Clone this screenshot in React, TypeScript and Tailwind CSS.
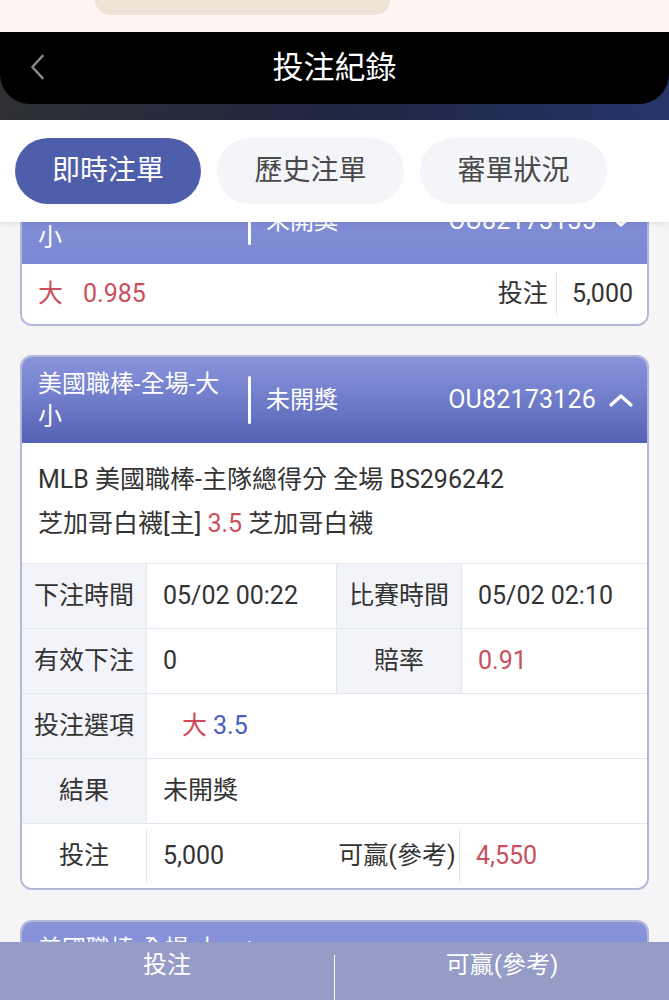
import type { ReactNode } from "react";

const FONT = "font-['Roboto','Noto_Sans_CJK_TC',sans-serif]";

function ChevronUp({ down }: { down?: boolean }) {
  return (
    <svg viewBox="0 0 24 14" className={`h-[14px] w-[24px] ${down ? "rotate-180" : ""}`} aria-hidden="true">
      <polyline points="2,12 12,3 22,12" fill="none" stroke="white" strokeWidth="3.2" strokeLinecap="round" strokeLinejoin="round" />
    </svg>
  );
}

function CardHeader({ id, open }: { id: string; open?: boolean }) {
  return (
    <div
      className={`flex h-[86px] items-center pl-[16px] pr-[14px] text-white ${
        open
          ? "bg-[linear-gradient(180deg,#8994db_0%,#6f7cc9_50%,#5562b4_100%)]"
          : "bg-[linear-gradient(180deg,#8893da,#7a88d3)]"
      }`}
    >
      <div className="w-[196px] text-[24px] leading-[32px]">
        美國職棒-全場-大
        <br />小
      </div>
      <div className="ml-[14px] h-[48px] w-[3px] rounded bg-white" />
      <div className="ml-[15px] text-[24px]">未開獎</div>
      <div className="flex-1 text-right text-[25px] tracking-[0.2px]">{id}</div>
      <div className="ml-[13px] flex items-center">
        <ChevronUp down={!open} />
      </div>
    </div>
  );
}

function Label({ children, white }: { children: ReactNode; white?: boolean }) {
  return (
    <div className={`flex h-[64px] items-center justify-center ${white ? "bg-white" : "bg-[#f3f4fa]"} text-[#333]`}>
      {children}
    </div>
  );
}

function Value({ children, className = "" }: { children: ReactNode; className?: string }) {
  return <div className={`flex h-[64px] items-center bg-white pl-[16px] text-[#333] ${className}`}>{children}</div>;
}

export default function App() {
  return (
    <div className={`${FONT} flex h-[1000px] w-[669px] flex-col overflow-hidden bg-[#f5f5f7]`}>
      {/* status strip */}
      <div className="h-[32px] shrink-0 bg-[#fdf6f2]">
        <div className="ml-[95px] h-[15px] w-[295px] rounded-b-[22px] bg-[#eee3d6]" />
      </div>

      {/* nav header */}
      <div className="h-[88px] shrink-0 bg-[linear-gradient(90deg,#2f3135,#1f2640_50%,#26346a)]">
        <div className="relative flex h-[72px] items-center justify-center rounded-b-[30px] bg-black">
          <svg viewBox="0 0 16 28" className="absolute left-[29px] top-[22px] h-[26px] w-[16px]" aria-hidden="true">
            <polyline points="14,2 3,14 14,26" fill="none" stroke="#8a8a8a" strokeWidth="2.6" strokeLinecap="round" strokeLinejoin="round" />
          </svg>
          <span className="text-[31px] text-white">投注紀錄</span>
        </div>
      </div>

      {/* tabs */}
      <div className="relative z-10 flex h-[102px] shrink-0 items-center gap-[16px] bg-white px-[15px] shadow-[0_2px_5px_rgba(0,0,0,0.08)]">
        <button className="h-[66px] w-[186px] rounded-full bg-[#4f5eab] text-[28px] text-white">即時注單</button>
        <button className="h-[66px] w-[187px] rounded-full bg-[#f4f5f9] text-[28px] text-[#4a4a4a]">歷史注單</button>
        <button className="h-[66px] w-[187px] rounded-full bg-[#f4f5f9] text-[28px] text-[#4a4a4a]">審單狀況</button>
      </div>

      {/* scrolled list */}
      <div className="h-[720px] shrink-0 overflow-hidden px-[20px]">
        {/* card 1 (collapsed) */}
        <div className="-mt-[46px] overflow-hidden rounded-[12px] border-2 border-[#b3b8da]">
          <CardHeader id="OU82173135" />
          <div className="flex h-[60px] items-center bg-white pl-[16px] pr-[14px] text-[25px]">
            <span className="text-[#c9505c]">大</span>
            <span className="ml-[20px] text-[#c9505c]">0.985</span>
            <span className="ml-auto text-[#333]">投注</span>
            <span className="mx-[8px] h-[42px] w-px bg-[#e2e2e6]" />
            <span className="ml-[7px] text-[#333]">5,000</span>
          </div>
        </div>

        {/* card 2 (expanded) */}
        <div className="mt-[29px] overflow-hidden rounded-[12px] border-2 border-[#b3b8da]">
          <CardHeader id="OU82173126" open />
          <div className="bg-white pb-[17px] pl-[16px] pt-[15px] text-[25px] leading-[44px] text-[#333]">
            <div>MLB 美國職棒-主隊總得分 全場 BS296242</div>
            <div>
              芝加哥白襪[主] <span className="text-[#c9505c]">3.5</span> 芝加哥白襪
            </div>
          </div>
          <div className="grid grid-cols-[124px_189px_124px_1fr] gap-px bg-[#e3e6ef] pt-px text-[25px]">
            <Label>下注時間</Label>
            <Value>05/02 00:22</Value>
            <Label>比賽時間</Label>
            <Value>05/02 02:10</Value>

            <Label>有效下注</Label>
            <Value>0</Value>
            <Label>賠率</Label>
            <Value className="!text-[#c9505c]">0.91</Value>

            <Label>投注選項</Label>
            <div className="col-span-3 flex h-[64px] items-center bg-white pl-[35px]">
              <span className="text-[#d04a56]">大</span>
              <span className="ml-[6px] text-[#4b5cc4]">3.5</span>
            </div>

            <Label>結果</Label>
            <div className="col-span-3 flex h-[64px] items-center bg-white pl-[16px] text-[#333]">未開獎</div>
          </div>
          <div className="grid h-[65px] grid-cols-[124px_189px_124px_1fr] border-t border-[#e3e6ef] bg-white text-[25px] text-[#333]">
            <div className="flex items-center justify-center">投注</div>
            <div className="my-[6px] flex items-center border-l border-[#e3e6ef] pl-[16px]">5,000</div>
            <div className="flex items-center justify-center">可贏(參考)</div>
            <div className="my-[6px] flex items-center border-l border-[#e3e6ef] pl-[16px] text-[#c9505c]">4,550</div>
          </div>
        </div>

        {/* card 3 (cut off) */}
        <div className="mt-[30px] overflow-hidden rounded-[12px] border-2 border-[#b3b8da]">
          <CardHeader id="OU82173101" />
        </div>
      </div>

      {/* totals bar */}
      <div className="flex h-[100px] shrink-0 bg-[#959cc5] text-white">
        <div className="flex flex-1 flex-col items-center pt-[6px]">
          <span className="text-[24px] leading-[34px]">投注</span>
          <span className="mt-[8px] text-[30px] font-bold">25,000</span>
        </div>
        <div className="mt-[13px] w-px bg-white" />
        <div className="flex flex-1 flex-col items-center pt-[6px]">
          <span className="text-[24px] leading-[34px]">可贏(參考)</span>
          <span className="mt-[8px] text-[30px] font-bold">22,783.50</span>
        </div>
      </div>
    </div>
  );
}
